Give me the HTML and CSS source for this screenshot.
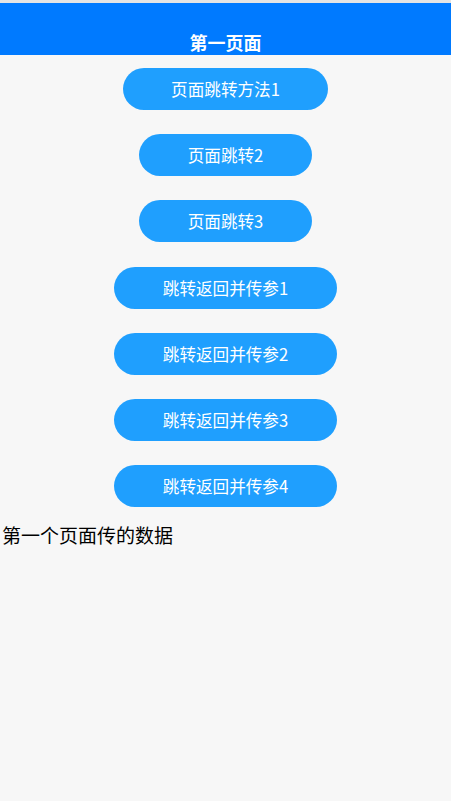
FILE: index.html
```html
<!DOCTYPE html>
<html lang="zh">
<head>
    <meta charset="UTF-8">
    <meta name="viewport" content="width=device-width, initial-scale=1.0">
    <title>第一页面</title>
    <link rel="stylesheet" href="styles.css">
</head>
<body>

    <div class="status-bar"></div>

    <!-- 导航栏 -->
    <div class="navbar">
        <span class="nav-title">第一页面</span>
    </div>

    <div class="content">
        <div class="btn-list">
            <button class="jump-btn">页面跳转方法1</button>
            <button class="jump-btn">页面跳转2</button>
            <button class="jump-btn">页面跳转3</button>
            <button class="jump-btn">跳转返回并传参1</button>
            <button class="jump-btn">跳转返回并传参2</button>
            <button class="jump-btn">跳转返回并传参3</button>
            <button class="jump-btn">跳转返回并传参4</button>
        </div>
        <div class="result">第一个页面传的数据</div>
    </div>

</body>
</html>
```

FILE: styles.css
```css
html, body {
    height: 100%;
}
body {
    font-family: "Noto Sans CJK SC", "Noto Sans", sans-serif;
    margin: 0;
    padding: 0;
    background: #f7f7f7;
}
.status-bar {
    height: 3px;
    background: #e4e4e4;
}
.navbar {
    background: #007aff;
    height: 52px;
    display: flex;
    justify-content: center;
    align-items: flex-end;
    box-sizing: border-box;
    padding-bottom: 1px;
}
.nav-title {
    color: white;
    font-size: 18px;
    font-weight: bold;
    line-height: 24px;
}
.btn-list {
    display: flex;
    flex-direction: column;
    align-items: center;
    gap: 24.2px;
    padding-top: 13px;
}
.jump-btn {
    font-family: inherit;
    background: #1f9ffe;
    color: white;
    border: none;
    height: 42px;
    padding: 0 48.5px;
    border-radius: 21px;
    font-size: 16.6px;
    line-height: 42px;
    cursor: pointer;
}
.result {
    margin-top: 14px;
    padding-left: 2px;
    font-size: 19px;
    line-height: 28px;
    color: #000;
}
```
